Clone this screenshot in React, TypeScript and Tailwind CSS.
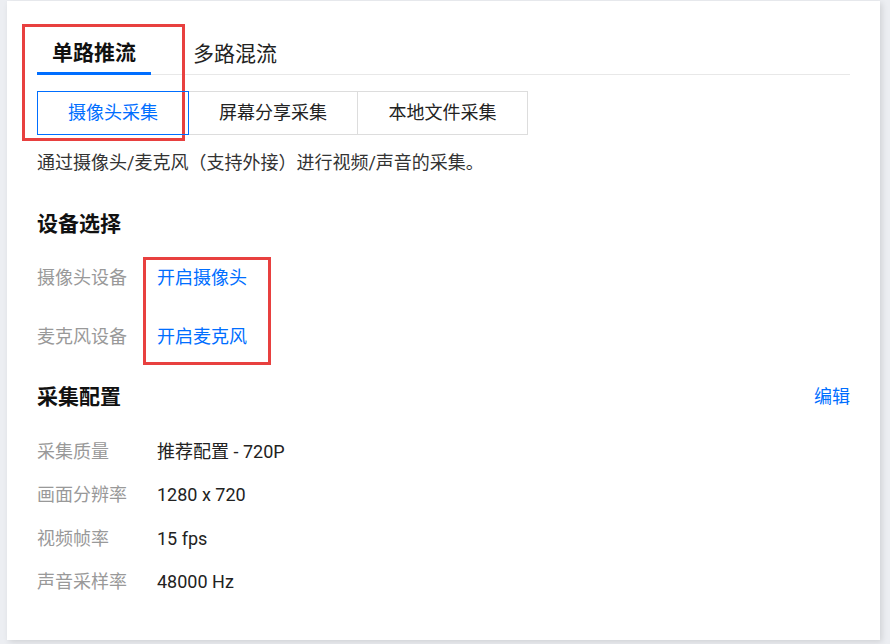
import React from "react";

const FONT = "font-['Roboto','Noto_Sans_CJK_SC',sans-serif]";

function InfoRow({ label, value }: { label: string; value: string }) {
  return (
    <div className="flex h-[43.5px] items-center">
      <div className="w-[120px] text-[#999999]">{label}</div>
      <div className="text-[#222222]">{value}</div>
    </div>
  );
}

export default function App() {
  return (
    <div className={`${FONT} w-[890px] h-[644px] bg-[#eceef2] pl-[7px] pt-[1px] overflow-hidden text-[18px] leading-none`}>
      <div className="relative w-[873px] h-[639px] bg-white shadow-[2px_2px_6px_rgba(0,0,0,0.12)] pt-[30px] px-[30px]">
        {/* main tabs */}
        <div className="flex gap-[27px] border-b border-[#e8e8e8]">
          <div className="h-[44px] px-[15px] pt-[3px] flex items-center border-b-[3px] border-[#006eff] -mb-px text-[21px] font-bold text-[#111111]">
            单路推流
          </div>
          <div className="h-[44px] px-[15px] pt-[3px] flex items-center -mb-px text-[21px] text-[#222222]">
            多路混流
          </div>
        </div>

        {/* sub tabs */}
        <div className="mt-[16px] flex">
          <div className="relative z-10 h-[44px] w-[152px] flex items-center justify-center border border-[#006eff] text-[#006eff]">
            摄像头采集
          </div>
          <div className="h-[44px] w-[170px] -ml-px flex items-center justify-center border border-[#dddddd] text-[#222222]">
            屏幕分享采集
          </div>
          <div className="h-[44px] w-[171px] -ml-px flex items-center justify-center border border-[#dddddd] text-[#222222]">
            本地文件采集
          </div>
        </div>

        <div className="mt-[14px] h-[28px] flex items-center text-[#333333]">
          通过摄像头/麦克风（支持外接）进行视频/声音的采集。
        </div>

        <div className="mt-[32px] h-[30px] flex items-center text-[21px] font-bold text-[#111111]">
          设备选择
        </div>

        <div className="mt-[19px] flex h-[40px] items-center">
          <div className="w-[120px] text-[#999999]">摄像头设备</div>
          <div className="text-[#006eff]">开启摄像头</div>
        </div>
        <div className="mt-[19px] flex h-[40px] items-center">
          <div className="w-[120px] text-[#999999]">麦克风设备</div>
          <div className="text-[#006eff]">开启麦克风</div>
        </div>

        <div className="mt-[25px] h-[30px] flex items-center justify-between">
          <div className="text-[21px] font-bold text-[#111111]">采集配置</div>
          <div className="text-[#006eff]">编辑</div>
        </div>

        <div className="mt-[18px]">
          <InfoRow label="采集质量" value="推荐配置 - 720P" />
          <InfoRow label="画面分辨率" value="1280 x 720" />
          <InfoRow label="视频帧率" value="15 fps" />
          <InfoRow label="声音采样率" value="48000 Hz" />
        </div>

        {/* annotation boxes */}
        <div className="absolute left-[15px] top-[23px] w-[163px] h-[117px] border-[3px] border-[#e8403f] pointer-events-none" />
        <div className="absolute left-[136px] top-[256px] w-[128px] h-[108px] border-[3px] border-[#e8403f] pointer-events-none" />
      </div>
    </div>
  );
}
